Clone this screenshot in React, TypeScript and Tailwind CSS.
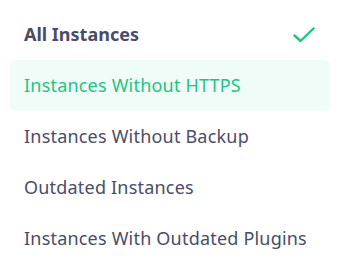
const OPTIONS = [
  'All Instances',
  'Instances Without HTTPS',
  'Instances Without Backup',
  'Outdated Instances',
  'Instances With Outdated Plugins',
]

export default function App() {
  const selected = 0
  const hovered = 1

  return (
    <div className="h-[274px] w-[340px] bg-white px-[10px] pt-[9px] font-['Noto_Sans',sans-serif]">
      <ul className="flex flex-col">
        {OPTIONS.map((label, i) => (
          <li
            key={label}
            className={
              'flex h-[51px] items-center justify-between rounded-md pl-[14px] pr-[14px] text-[18px] ' +
              (i === hovered ? 'bg-[#f0fcf7] text-[#1fc47f] ' : 'text-[#4b4c66] ') +
              (i === selected ? 'font-bold' : 'tracking-[0.2px]')
            }
          >
            <span>{label}</span>
            {i === selected && (
              <svg width="22" height="16" viewBox="0 0 22 16" fill="none" className="mr-[1px]">
                <path
                  d="M1.5 8.5 7.5 14 20.5 1.5"
                  stroke="#1fc47f"
                  strokeWidth="2.4"
                  strokeLinecap="round"
                  strokeLinejoin="round"
                />
              </svg>
            )}
          </li>
        ))}
      </ul>
    </div>
  )
}
